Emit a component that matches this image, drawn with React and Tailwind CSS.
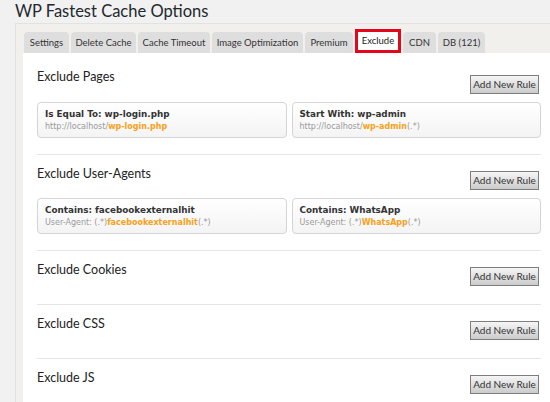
import React from "react";

const tabs = [
  { label: "Settings", w: 45 },
  { label: "Delete Cache", w: 65 },
  { label: "Cache Timeout", w: 72 },
  { label: "Image Optimization", w: 91 },
  { label: "Premium", w: 48 },
  { label: "Exclude", w: 46, active: true },
  { label: "CDN", w: 33 },
  { label: "DB (121)", w: 47 },
];

function AddButton() {
  return (
    <button className="block h-[19px] w-[69px] shrink-0 border border-[#7d7d7d] bg-gradient-to-b from-[#f6f6f6] to-[#cbcbcb] text-center text-[10px] leading-[17px] text-[#333] [font-family:Lato,sans-serif]">
      Add New Rule
    </button>
  );
}

function Card({ title, prefix, highlight, suffix }) {
  return (
    <div className="h-[36px] rounded-[4px] border border-[#d4d4d4] bg-gradient-to-b from-white to-[#f4f4f4] pl-[7px] pt-[5px] [font-family:'DejaVu_Sans',Verdana,sans-serif]">
      <div className="whitespace-nowrap text-[8.8px] font-bold leading-[13px] text-[#333]">{title}</div>
      <div className="whitespace-nowrap text-[8px] leading-[12px] text-[#9a9a9a]">
        {prefix}
        <span className="font-bold text-[#f7a11a]">{highlight}</span>
        {suffix}
      </div>
    </div>
  );
}

function Section({ title, cards, first, last }) {
  return (
    <div className={`${first ? "pt-[17px]" : "pt-[12px]"} ${last ? "" : "border-b border-[#e5e5e5]"} ${cards ? "pb-[16px]" : "pb-[18px]"}`}>
      <div className="flex items-start justify-between pr-[2px]">
        <h3 className="text-[12.5px] leading-[14px] text-[#222] [font-family:Lato,sans-serif]">{title}</h3>
        <div className={`flex ${first ? "mt-[5px]" : "mt-[4px]"}`}>
          <AddButton />
        </div>
      </div>
      {cards && (
        <div className="mt-[8px] grid grid-cols-2 gap-[5px]">
          {cards.map((c, i) => (
            <Card key={i} {...c} />
          ))}
        </div>
      )}
    </div>
  );
}

export default function App() {
  return (
    <div className="h-[402px] w-[550px] overflow-hidden bg-[#f1f1f1] pl-[15px] [font-family:Lato,sans-serif]">
      <h1 className="pt-[1px] text-[16.5px] leading-[21px] text-[#23282d]">WP Fastest Cache Options</h1>
      <div className="mt-[1px] border-l border-t border-[#e2e2e2] bg-[#f1f0ec] pl-[7px] pt-[5px]">
        <div className="flex items-end gap-[2px] pl-[1px]">
          {tabs.map((t) =>
            t.active ? (
              <div
                key={t.label}
                className="flex h-[24px] items-center justify-center border-[3px] border-[#e2071b] bg-white text-[9.5px] leading-none text-[#222]"
                style={{ width: t.w }}
              >
                {t.label}
              </div>
            ) : (
              <div
                key={t.label}
                className="flex h-[21px] items-center justify-center rounded-t-[4px] bg-[#dedede] text-[9.5px] leading-none text-[#333]"
                style={{ width: t.w }}
              >
                {t.label}
              </div>
            )
          )}
        </div>
        <div className="bg-white pl-[14px] pr-[9px]">
          <Section
            first
            title="Exclude Pages"
            cards={[
              { title: "Is Equal To: wp-login.php", prefix: "http://localhost/", highlight: "wp-login.php", suffix: "" },
              { title: "Start With: wp-admin", prefix: "http://localhost/", highlight: "wp-admin", suffix: "(.*)" },
            ]}
          />
          <Section
            title="Exclude User-Agents"
            cards={[
              { title: "Contains: facebookexternalhit", prefix: "User-Agent: (.*)", highlight: "facebookexternalhit", suffix: "(.*)" },
              { title: "Contains: WhatsApp", prefix: "User-Agent: (.*)", highlight: "WhatsApp", suffix: "(.*)" },
            ]}
          />
          <Section title="Exclude Cookies" />
          <Section title="Exclude CSS" />
          <Section title="Exclude JS" last />
          <div className="h-[40px]" />
        </div>
      </div>
    </div>
  );
}
